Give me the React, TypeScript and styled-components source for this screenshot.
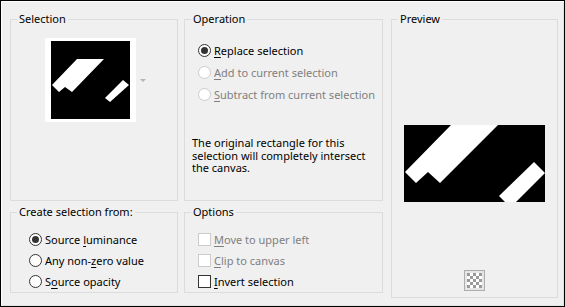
import styled, { createGlobalStyle } from "styled-components";

const GlobalStyle = createGlobalStyle`
  html, body {
    margin: 0;
    padding: 0;
    background: #f0f0f0;
  }
  body {
    font-family: "Noto Sans", "Liberation Sans", sans-serif;
    font-size: 11px;
    color: #000;
  }
`;

const Dialog = styled.div`
  box-sizing: border-box;
  width: 565px;
  height: 307px;
  border: 1px solid #000;
  background: #f0f0f0;
  box-shadow: inset 1px 1px 0 #fff, inset -1px -1px 0 #e3e3e3;
  padding: 11px 0 0 9px;
  display: flex;
  gap: 8px;
`;

const LeftGrid = styled.div`
  display: grid;
  grid-template-columns: 168px 199px;
  grid-template-rows: 189px 88px;
  column-gap: 6px;
  row-gap: 4px;
`;

const Group = styled.fieldset<{ $width?: number; $height?: number }>`
  box-sizing: border-box;
  margin: 0;
  padding: 0;
  min-width: 0;
  border: 1px solid #dcdcdc;
  display: flex;
  flex-direction: column;
  width: ${(p) => (p.$width ? `${p.$width}px` : "auto")};
  height: ${(p) => (p.$height ? `${p.$height}px` : "auto")};
`;

const Title = styled.legend`
  padding: 0 2px;
  margin-left: 6px;
  font-size: 11px;
  line-height: 14px;
  color: #000;
`;

const ThumbRow = styled.div`
  display: flex;
  align-items: center;
  gap: 4px;
  margin: 12px 0 0 34px;
`;

const Thumb = styled.div`
  background: #fff;
  padding: 3px 6px;
  line-height: 0;
`;

const DropArrow = styled.span`
  width: 0;
  height: 0;
  border-left: 3px solid transparent;
  border-right: 3px solid transparent;
  border-top: 3px solid #b4b4b4;
`;

const OptionList = styled.div<{ $top: number; $left: number; $row: number }>`
  display: flex;
  flex-direction: column;
  margin: ${(p) => p.$top}px 0 0 ${(p) => p.$left}px;
  & > * {
    height: ${(p) => p.$row}px;
  }
`;

const Option = styled.label<{ $disabled?: boolean }>`
  display: flex;
  align-items: center;
  gap: 3px;
  white-space: nowrap;
  color: ${(p) => (p.$disabled ? "#7f7f7f" : "#000")};
`;

const RadioMark = styled.span<{ $checked?: boolean; $disabled?: boolean }>`
  box-sizing: border-box;
  width: 13px;
  height: 13px;
  flex: none;
  border-radius: 50%;
  border: 1px solid ${(p) => (p.$disabled ? "#cccccc" : "#333")};
  background: #fff;
  display: flex;
  align-items: center;
  justify-content: center;
  &::after {
    content: "";
    width: 7px;
    height: 7px;
    border-radius: 50%;
    background: ${(p) => (p.$checked ? "#333" : "transparent")};
  }
`;

const CheckMark = styled.span<{ $disabled?: boolean }>`
  box-sizing: border-box;
  width: 13px;
  height: 13px;
  flex: none;
  border: 1px solid ${(p) => (p.$disabled ? "#cccccc" : "#333")};
  background: #fff;
`;

const Key = styled.span`
  text-decoration: underline;
  text-underline-offset: 2px;
`;

const Note = styled.p`
  margin: 32px 0 0 7px;
  width: 180px;
  line-height: 12.5px;
`;

const PreviewBox = styled.div`
  align-self: center;
  margin-top: 99px;
  line-height: 0;
`;

const CheckerButton = styled.div`
  align-self: center;
  margin-top: 68px;
  line-height: 0;
`;

const SelectionThumb = () => (
  <svg width="79" height="78" viewBox="0 0 79 78">
    <rect width="79" height="78" fill="#000" />
    <polygon
      points="26,18 53,18 21,51 14,46 8,51 1,44"
      fill="#fff"
    />
    <polygon points="72,39 78,44 59,61 54,57" fill="#fff" />
  </svg>
);

const PreviewImage = () => (
  <svg width="141" height="77" viewBox="0 0 141 77">
    <rect width="141" height="77" fill="#000" />
    <polygon
      points="47,0 94,0 36,58 24,47 12,58 1,47"
      fill="#fff"
    />
    <polygon points="130,37 141,48 112,77 101,77 95,71" fill="#fff" />
  </svg>
);

const CheckerIcon = () => {
  const cells = [];
  for (let r = 0; r < 5; r++) {
    for (let c = 0; c < 5; c++) {
      if ((r + c) % 2 === 0) {
        cells.push(
          <rect key={`${r}-${c}`} x={3 + c * 3} y={3 + r * 3} width="3" height="3" fill="#9a9a9a" />
        );
      }
    }
  }
  return (
    <svg width="21" height="21" viewBox="0 0 21 21">
      <rect x="0.5" y="0.5" width="20" height="20" fill="#e6e6e6" stroke="#adadad" />
      <rect x="3" y="3" width="15" height="15" fill="#fff" />
      {cells}
    </svg>
  );
};

export default function App() {
  return (
    <>
      <GlobalStyle />
      <Dialog>
        <LeftGrid>
          <Group>
            <Title>Selection</Title>
            <ThumbRow>
              <Thumb>
                <SelectionThumb />
              </Thumb>
              <DropArrow />
            </ThumbRow>
          </Group>

          <Group>
            <Title>Operation</Title>
            <OptionList $top={13} $left={13} $row={22}>
              <Option>
                <RadioMark $checked />
                <span>
                  <Key>R</Key>eplace selection
                </span>
              </Option>
              <Option $disabled>
                <RadioMark $disabled />
                <span>
                  <Key>A</Key>dd to current selection
                </span>
              </Option>
              <Option $disabled>
                <RadioMark $disabled />
                <span>
                  <Key>S</Key>ubtract from current selection
                </span>
              </Option>
            </OptionList>
            <Note>
              The original rectangle for this selection will completely
              intersect the canvas.
            </Note>
          </Group>

          <Group>
            <Title>Create selection from:</Title>
            <OptionList $top={10} $left={18} $row={21}>
              <Option>
                <RadioMark $checked />
                <span>
                  Source <Key>l</Key>uminance
                </span>
              </Option>
              <Option>
                <RadioMark />
                <span>
                  Any non-<Key>z</Key>ero value
                </span>
              </Option>
              <Option>
                <RadioMark />
                <span>
                  S<Key>o</Key>urce opacity
                </span>
              </Option>
            </OptionList>
          </Group>

          <Group>
            <Title>Options</Title>
            <OptionList $top={10} $left={13} $row={21}>
              <Option $disabled>
                <CheckMark $disabled />
                <span>
                  <Key>M</Key>ove to upper left
                </span>
              </Option>
              <Option $disabled>
                <CheckMark $disabled />
                <span>
                  <Key>C</Key>lip to canvas
                </span>
              </Option>
              <Option>
                <CheckMark />
                <span>
                  <Key>I</Key>nvert selection
                </span>
              </Option>
            </OptionList>
          </Group>
        </LeftGrid>

        <Group $width={167} $height={286}>
          <Title>Preview</Title>
          <PreviewBox>
            <PreviewImage />
          </PreviewBox>
          <CheckerButton>
            <CheckerIcon />
          </CheckerButton>
        </Group>
      </Dialog>
    </>
  );
}
